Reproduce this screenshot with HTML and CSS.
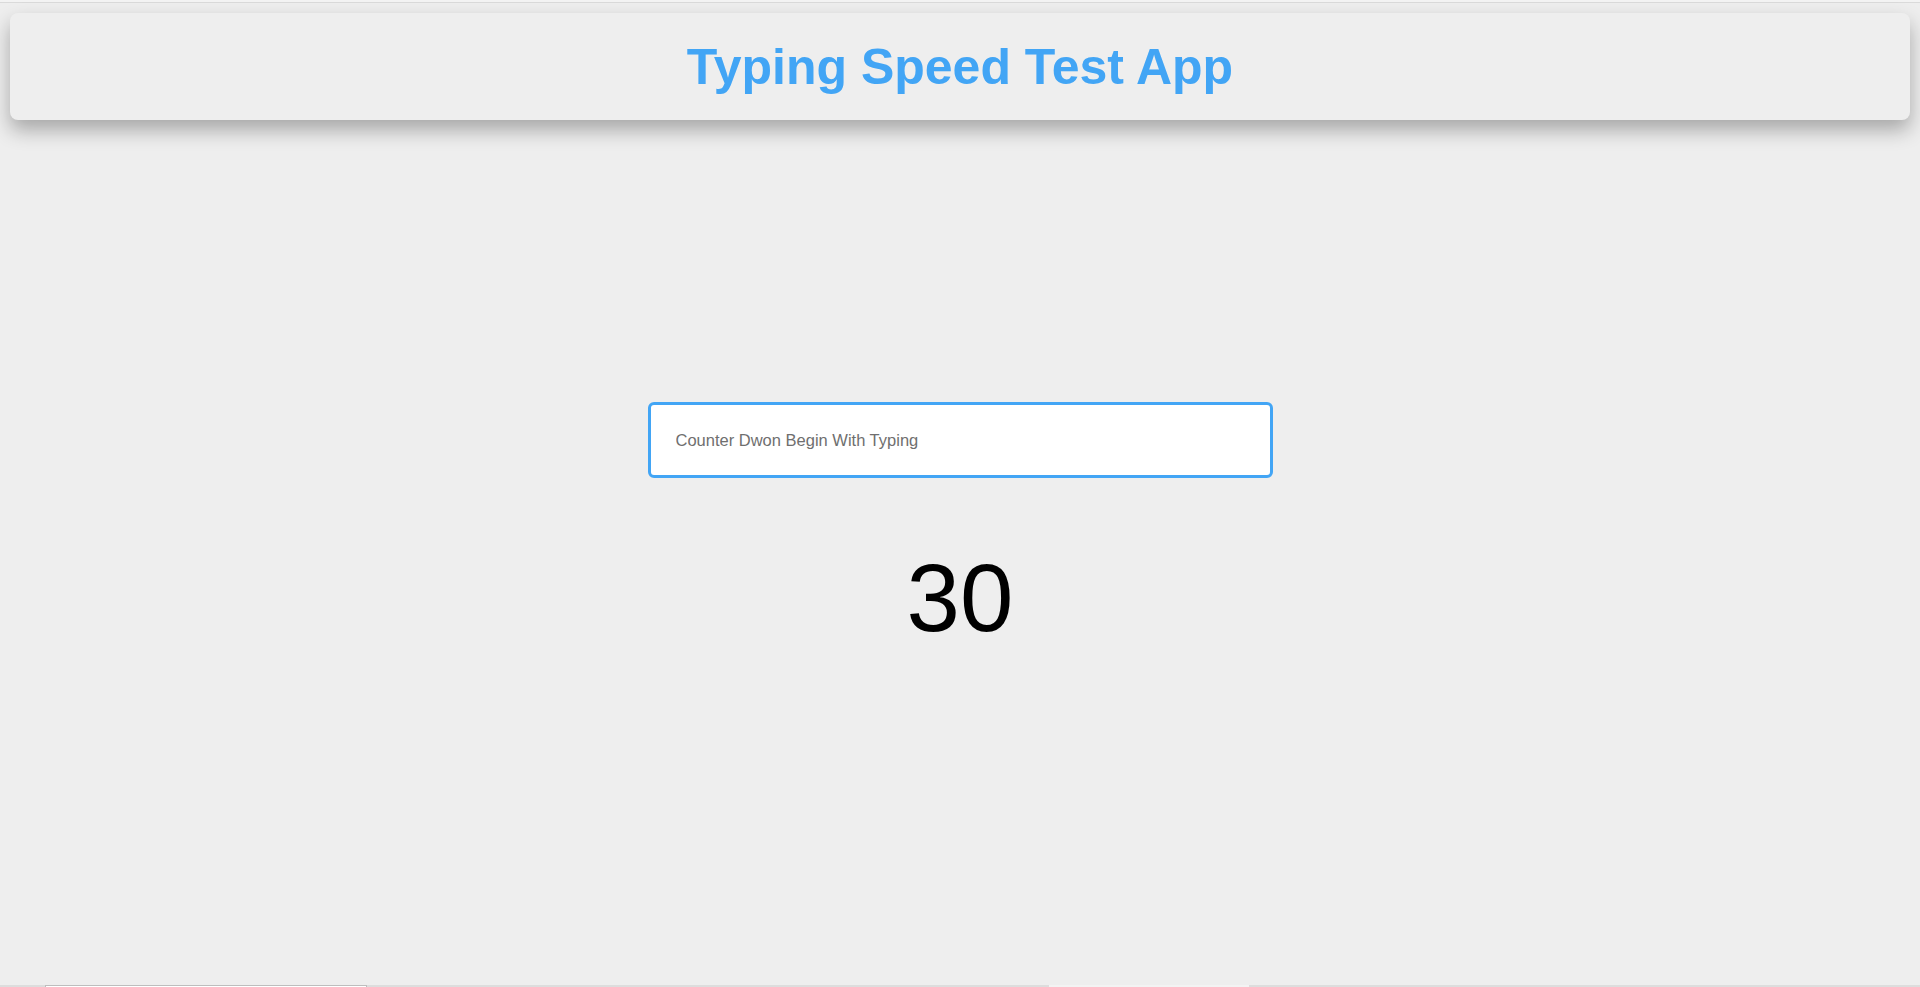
FILE: index.html
```html
<!DOCTYPE html>
<html lang="en">
<head>
<meta charset="utf-8">
<title>Typing Speed Test App</title>
<link rel="stylesheet" href="styles.css">
</head>
<body>
<div class="topline"></div>
<header class="app-header">
  <h1 class="title">Typing Speed Test App</h1>
</header>
<main class="main">
  <input class="typing-input" type="text" placeholder="Counter Dwon Begin With Typing">
  <div class="counter">30</div>
</main>
<div class="bottom-strip">
  <span class="seg seg-a"></span>
  <span class="seg seg-b"></span>
</div>
</body>
</html>
```

FILE: styles.css
```css
html, body {
  margin: 0;
  padding: 0;
}
body {
  background: #eeeeee;
  font-family: "Liberation Sans", Arial, sans-serif;
  min-height: 100vh;
  display: flex;
  flex-direction: column;
  overflow: hidden;
}
.topline {
  height: 2px;
  background: #f3f3f3;
  border-bottom: 1px solid #dadada;
}
.app-header {
  margin: 10px 10px 0;
  height: 107px;
  background: #eeeeee;
  border-radius: 8px;
  box-shadow: 0 10px 20px rgba(0, 0, 0, 0.3);
  display: flex;
  align-items: center;
  justify-content: center;
}
.title {
  margin: 0;
  font-size: 50px;
  font-weight: bold;
  color: #42a5f5;
}
.main {
  flex: 1;
  display: flex;
  flex-direction: column;
  align-items: center;
  padding-top: 282px;
}
.typing-input {
  box-sizing: border-box;
  width: 625px;
  height: 76px;
  border: 3px solid #42a5f5;
  border-radius: 6px;
  background: #ffffff;
  padding: 0 25px;
  font-family: "Liberation Sans", Arial, sans-serif;
  font-size: 16.5px;
  color: #333;
  outline: none;
}
.typing-input::placeholder {
  color: #6f6f6f;
}
.counter {
  margin-top: 65px;
  font-size: 96px;
  color: #000;
}
.bottom-strip {
  height: 2px;
  background: #dddddd;
  display: flex;
}
.seg {
  display: block;
  height: 2px;
}
.seg-a {
  margin-left: 45px;
  width: 322px;
  background: #ffffff;
  box-shadow: inset 1px 1px 0 #bdbdbd, inset -1px 0 0 #bdbdbd;
}
.seg-b {
  margin-left: 682px;
  width: 200px;
  background: #f3f3f3;
}
```
